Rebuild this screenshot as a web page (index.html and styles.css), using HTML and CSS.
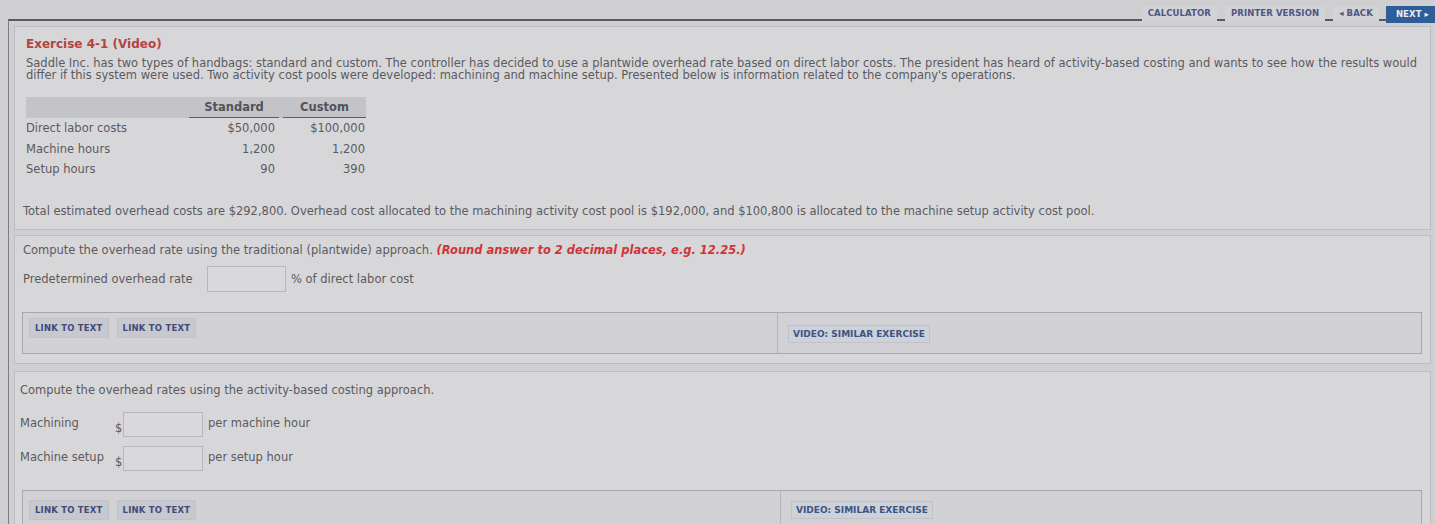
FILE: index.html
```html
<!DOCTYPE html>
<html>
<head>
<meta charset="utf-8">
<link rel="stylesheet" href="styles.css">
</head>
<body>
<div class="topbar">
  <nav class="nav">
    <span class="navbtn">CALCULATOR</span>
    <span class="navbtn">PRINTER VERSION</span>
    <span class="navbtn back">&#9666; BACK</span>
    <span class="navbtn next">NEXT &#9656;</span>
  </nav>
</div>
<div class="frame">
  <section class="part intro">
    <h1 class="title">Exercise 4-1 (Video)</h1>
    <p class="para">Saddle Inc. has two types of handbags: standard and custom. The controller has decided to use a plantwide overhead rate based on direct labor costs. The president has heard of activity-based costing and wants to see how the results would differ if this system were used. Two activity cost pools were developed: machining and machine setup. Presented below is information related to the company's operations.</p>
    <table class="data">
      <thead>
        <tr><th class="lab"></th><th class="c1"><span>Standard</span></th><th class="c2"><span>Custom</span></th></tr>
      </thead>
      <tbody>
        <tr><td class="lab">Direct labor costs</td><td class="c1">$50,000</td><td class="c2">$100,000</td></tr>
        <tr><td class="lab">Machine hours</td><td class="c1">1,200</td><td class="c2">1,200</td></tr>
        <tr><td class="lab">Setup hours</td><td class="c1">90</td><td class="c2">390</td></tr>
      </tbody>
    </table>
    <p class="total">Total estimated overhead costs are $292,800. Overhead cost allocated to the machining activity cost pool is $192,000, and $100,800 is allocated to the machine setup activity cost pool.</p>
  </section>

  <section class="part q1">
    <p class="ask">Compute the overhead rate using the traditional (plantwide) approach. <strong class="hint">(Round answer to 2 decimal places, e.g. 12.25.)</strong></p>
    <div class="row">
      <span class="rowlabel">Predetermined overhead rate</span>
      <span class="field"></span>
      <span class="unit">% of direct labor cost</span>
    </div>
    <div class="links">
      <div class="lcell">
        <span class="lbtn">LINK TO TEXT</span>
        <span class="lbtn">LINK TO TEXT</span>
      </div>
      <div class="rcell">
        <span class="lbtn video">VIDEO: SIMILAR EXERCISE</span>
      </div>
    </div>
  </section>

  <section class="part q2">
    <p class="ask">Compute the overhead rates using the activity-based costing approach.</p>
    <div class="row abc">
      <span class="rowlabel short">Machining</span>
      <span class="dollar">$</span>
      <span class="field sm"></span>
      <span class="unit">per machine hour</span>
    </div>
    <div class="row abc">
      <span class="rowlabel short">Machine setup</span>
      <span class="dollar">$</span>
      <span class="field sm"></span>
      <span class="unit">per setup hour</span>
    </div>
    <div class="links last">
      <div class="lcell">
        <span class="lbtn">LINK TO TEXT</span>
        <span class="lbtn">LINK TO TEXT</span>
      </div>
      <div class="rcell">
        <span class="lbtn video">VIDEO: SIMILAR EXERCISE</span>
      </div>
    </div>
  </section>
</div>
</body>
</html>
```

FILE: styles.css
```css
html, body {
  margin: 0;
  padding: 0;
}
body {
  background: #cfcfd2;
  font-family: "DejaVu Sans", Verdana, sans-serif;
  font-size: 11.5px;
  color: #5b5a5e;
  width: 1435px;
  height: 524px;
  overflow: hidden;
}
.topbar {
  height: 19px;
  display: flex;
  justify-content: flex-end;
  align-items: flex-start;
}
.nav {
  display: flex;
  align-items: flex-start;
  padding-top: 6px;
}
.navbtn {
  font-size: 8.5px;
  font-weight: bold;
  color: #4d5683;
  padding: 2px 6px;
  margin-left: 8px;
  background: #d3d3d7;
  letter-spacing: 0.1px;
  line-height: 11px;
}
.navbtn.next {
  background: #2f5d98;
  color: #e8ecf5;
  padding: 3px 6px 3px 10px;
  margin-left: 7px;
}
.frame {
  margin-left: 8px;
  border-top: 2px solid #5a5a5e;
  border-left: 1px solid #7d7d80;
  padding: 5px 4px 0 5px;
  height: 503px;
  overflow: hidden;
}
.part {
  border: 1px solid #bdbdc1;
  background: #d7d7da;
}
.intro {
  padding: 10px 10px 10px 11px;
  height: 182px;
}
.title {
  margin: 0;
  font-size: 12px;
  font-weight: bold;
  color: #b4443f;
  line-height: 14px;
}
.para {
  margin: 6px 0 0 0;
  line-height: 12px;
  max-width: 1400px;
}
.data {
  border-collapse: separate;
  border-spacing: 0;
  margin-top: 16px;
}
.data th {
  background: #c4c4c8;
  height: 21px;
  padding: 0;
  font-weight: bold;
  color: #535258;
}
.data th span {
  display: block;
  border-bottom: 1px solid #5d5d60;
  line-height: 20px;
  text-align: center;
}
.data th.c1 span { margin-right: 4px; }
.data td {
  height: 20.5px;
  padding: 0;
}
.data .lab {
  width: 163px;
  text-align: left;
}
.data th.c1 { width: 94px; }
.data td.c1 {
  width: 86px;
  text-align: right;
  padding-right: 8px;
}
.data th.c2 { width: 83px; }
.data td.c2 {
  width: 82px;
  text-align: right;
  padding-right: 1px;
}
.total {
  margin: 24px 0 0 -3px;
}
.q1 {
  margin-top: 5px;
  padding: 7px 0 9px 8px;
}
.ask {
  margin: 0;
  line-height: 14px;
}
.hint {
  color: #cf3438;
  font-style: italic;
  font-weight: bold;
}
.row {
  display: flex;
  align-items: center;
  margin-top: 9px;
}
.rowlabel {
  width: 184px;
}
.field {
  width: 77px;
  height: 24px;
  border: 1px solid #b8b8bc;
  background: #d9d9dc;
}
.unit {
  margin-left: 5px;
}
.links {
  display: flex;
  margin: 20px 8px 0 -1px;
  border: 1px solid #a9a9ad;
  background: #d2d2d6;
  height: 40px;
}
.lcell {
  width: 755px;
  border-right: 1px solid #b5b5b9;
  display: flex;
  align-items: flex-start;
  padding: 5px 0 0 6px;
  gap: 8px;
  box-sizing: border-box;
}
.rcell {
  padding: 12px 0 0 10px;
}
.lbtn {
  display: inline-block;
  font-size: 8.5px;
  font-weight: bold;
  color: #40497c;
  background: #c7c9cf;
  border: 1px solid #c0c2c8;
  padding: 4px 5px 4px 5px;
  letter-spacing: 0.2px;
  line-height: 10px;
}
.lbtn.video {
  font-size: 9px;
  color: #3d5386;
  background: #cdd1d8;
  padding: 3px 4px;
  letter-spacing: 0;
}
.q2 {
  margin-top: 7px;
  padding: 11px 0 10px 5px;
  border-bottom: none;
  height: 200px;
}
.q2 .row.abc {
  margin-top: 15px;
}
.q2 .row.abc + .row.abc {
  margin-top: 9px;
}
.rowlabel.short {
  width: 95px;
  align-self: flex-start;
  padding-top: 4px;
}
.dollar {
  align-self: flex-end;
  width: 8px;
  padding-bottom: 2px;
}
.field.sm {
  width: 78px;
  height: 23px;
}
.q2 .unit {
  align-self: flex-start;
  padding-top: 4px;
}
.links.last {
  margin-top: 19px;
  margin-left: 2px;
}
.links.last .lcell {
  padding-top: 9px;
  width: 758px;
}
.links.last .rcell {
  padding-top: 10px;
}
```
